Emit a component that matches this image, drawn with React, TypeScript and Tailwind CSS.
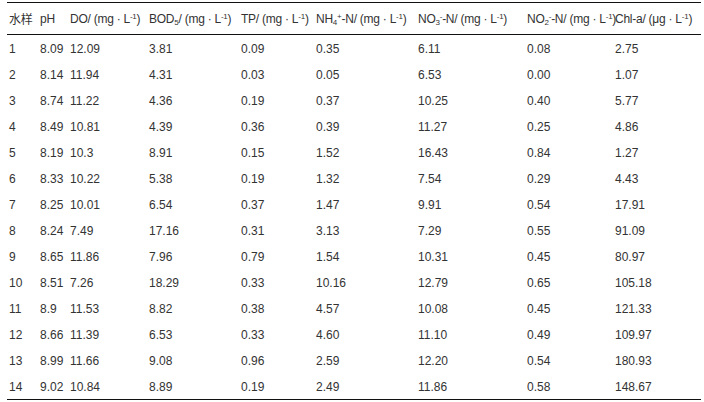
const cols = "grid grid-cols-[31px_30px_79px_92px_75px_102px_109px_88px_1fr]";

const rows = [
  ["1", "8.09", "12.09", "3.81", "0.09", "0.35", "6.11", "0.08", "2.75"],
  ["2", "8.14", "11.94", "4.31", "0.03", "0.05", "6.53", "0.00", "1.07"],
  ["3", "8.74", "11.22", "4.36", "0.19", "0.37", "10.25", "0.40", "5.77"],
  ["4", "8.49", "10.81", "4.39", "0.36", "0.39", "11.27", "0.25", "4.86"],
  ["5", "8.19", "10.3", "8.91", "0.15", "1.52", "16.43", "0.84", "1.27"],
  ["6", "8.33", "10.22", "5.38", "0.19", "1.32", "7.54", "0.29", "4.43"],
  ["7", "8.25", "10.01", "6.54", "0.37", "1.47", "9.91", "0.54", "17.91"],
  ["8", "8.24", "7.49", "17.16", "0.31", "3.13", "7.29", "0.55", "91.09"],
  ["9", "8.65", "11.86", "7.96", "0.79", "1.54", "10.31", "0.45", "80.97"],
  ["10", "8.51", "7.26", "18.29", "0.33", "10.16", "12.79", "0.65", "105.18"],
  ["11", "8.9", "11.53", "8.82", "0.38", "4.57", "10.08", "0.45", "121.33"],
  ["12", "8.66", "11.39", "6.53", "0.33", "4.60", "11.10", "0.49", "109.97"],
  ["13", "8.99", "11.66", "9.08", "0.96", "2.59", "12.20", "0.54", "180.93"],
  ["14", "9.02", "10.84", "8.89", "0.19", "2.49", "11.86", "0.58", "148.67"],
];

const Unit = ({ u = "mg" }: { u?: string }) => (
  <>
    / ({u} · L<sup className="text-[8px]">-1</sup>)
  </>
);

export default function App() {
  return (
    <div
      className="w-[704px] h-[402px] bg-white pt-[2px] pl-[7px] pr-[3px] text-[12px] text-[#333]"
      style={{ fontFamily: '"Liberation Sans", Arial, "Noto Sans CJK SC", sans-serif' }}
    >
      <div className="border-t border-[#111] border-b">
        <div className={`${cols} h-[32px] items-center pl-[2px] pt-[1px] border-b border-[#111] whitespace-nowrap tracking-[-0.25px]`}>
          <div style={{ fontFamily: '"Noto Sans CJK SC", sans-serif' }} className="text-[12px]">水样</div>
          <div>pH</div>
          <div>DO<Unit /></div>
          <div>BOD<sub className="text-[8px]">5</sub><Unit /></div>
          <div>TP<Unit /></div>
          <div>NH<sub className="text-[8px]">4</sub><sup className="text-[8px]">+</sup>-N<Unit /></div>
          <div>NO<sub className="text-[8px]">3</sub><sup className="text-[8px]">-</sup>-N<Unit /></div>
          <div>NO<sub className="text-[8px]">2</sub><sup className="text-[8px]">-</sup>-N<Unit /></div>
          <div>Chl-a<Unit u="μg" /></div>
        </div>
        {rows.map((r) => (
          <div key={r[0]} className={`${cols} h-[26px] pt-[5px] pl-[2px] leading-[18px]`}>
            {r.map((c, i) => (
              <div key={i}>{c}</div>
            ))}
          </div>
        ))}
      </div>
    </div>
  );
}
